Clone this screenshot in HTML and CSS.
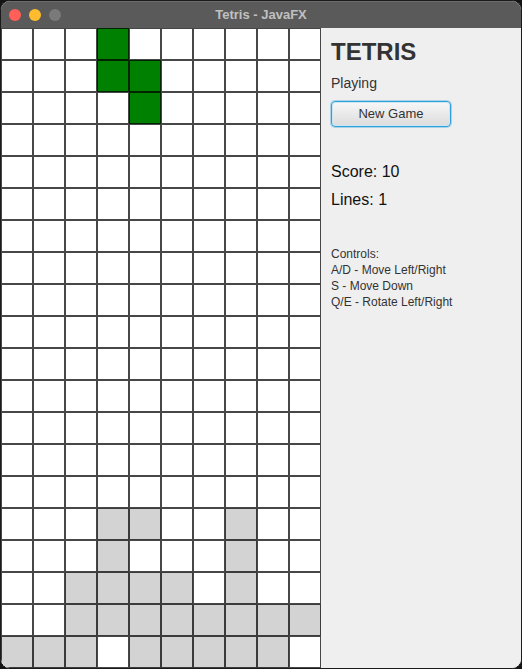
FILE: index.html
```html
<!DOCTYPE html>
<html>
<head>
<meta charset="utf-8">
<title>Tetris - JavaFX</title>
<link rel="stylesheet" href="styles.css">
</head>
<body>
<div class="window">
  <div class="titlebar">
    <div class="lights">
      <span class="light red"></span>
      <span class="light yellow"></span>
      <span class="light gray"></span>
    </div>
    <div class="title">Tetris - JavaFX</div>
  </div>
  <div class="content">
    <div class="board">
      <div class="c"></div><div class="c"></div><div class="c"></div><div class="c g"></div><div class="c"></div><div class="c"></div><div class="c"></div><div class="c"></div><div class="c"></div><div class="c"></div>
      <div class="c"></div><div class="c"></div><div class="c"></div><div class="c g"></div><div class="c g"></div><div class="c"></div><div class="c"></div><div class="c"></div><div class="c"></div><div class="c"></div>
      <div class="c"></div><div class="c"></div><div class="c"></div><div class="c"></div><div class="c g"></div><div class="c"></div><div class="c"></div><div class="c"></div><div class="c"></div><div class="c"></div>
      <div class="c"></div><div class="c"></div><div class="c"></div><div class="c"></div><div class="c"></div><div class="c"></div><div class="c"></div><div class="c"></div><div class="c"></div><div class="c"></div>
      <div class="c"></div><div class="c"></div><div class="c"></div><div class="c"></div><div class="c"></div><div class="c"></div><div class="c"></div><div class="c"></div><div class="c"></div><div class="c"></div>
      <div class="c"></div><div class="c"></div><div class="c"></div><div class="c"></div><div class="c"></div><div class="c"></div><div class="c"></div><div class="c"></div><div class="c"></div><div class="c"></div>
      <div class="c"></div><div class="c"></div><div class="c"></div><div class="c"></div><div class="c"></div><div class="c"></div><div class="c"></div><div class="c"></div><div class="c"></div><div class="c"></div>
      <div class="c"></div><div class="c"></div><div class="c"></div><div class="c"></div><div class="c"></div><div class="c"></div><div class="c"></div><div class="c"></div><div class="c"></div><div class="c"></div>
      <div class="c"></div><div class="c"></div><div class="c"></div><div class="c"></div><div class="c"></div><div class="c"></div><div class="c"></div><div class="c"></div><div class="c"></div><div class="c"></div>
      <div class="c"></div><div class="c"></div><div class="c"></div><div class="c"></div><div class="c"></div><div class="c"></div><div class="c"></div><div class="c"></div><div class="c"></div><div class="c"></div>
      <div class="c"></div><div class="c"></div><div class="c"></div><div class="c"></div><div class="c"></div><div class="c"></div><div class="c"></div><div class="c"></div><div class="c"></div><div class="c"></div>
      <div class="c"></div><div class="c"></div><div class="c"></div><div class="c"></div><div class="c"></div><div class="c"></div><div class="c"></div><div class="c"></div><div class="c"></div><div class="c"></div>
      <div class="c"></div><div class="c"></div><div class="c"></div><div class="c"></div><div class="c"></div><div class="c"></div><div class="c"></div><div class="c"></div><div class="c"></div><div class="c"></div>
      <div class="c"></div><div class="c"></div><div class="c"></div><div class="c"></div><div class="c"></div><div class="c"></div><div class="c"></div><div class="c"></div><div class="c"></div><div class="c"></div>
      <div class="c"></div><div class="c"></div><div class="c"></div><div class="c"></div><div class="c"></div><div class="c"></div><div class="c"></div><div class="c"></div><div class="c"></div><div class="c"></div>
      <div class="c"></div><div class="c"></div><div class="c"></div><div class="c s"></div><div class="c s"></div><div class="c"></div><div class="c"></div><div class="c s"></div><div class="c"></div><div class="c"></div>
      <div class="c"></div><div class="c"></div><div class="c"></div><div class="c s"></div><div class="c"></div><div class="c"></div><div class="c"></div><div class="c s"></div><div class="c"></div><div class="c"></div>
      <div class="c"></div><div class="c"></div><div class="c s"></div><div class="c s"></div><div class="c s"></div><div class="c s"></div><div class="c"></div><div class="c s"></div><div class="c"></div><div class="c"></div>
      <div class="c"></div><div class="c"></div><div class="c s"></div><div class="c s"></div><div class="c s"></div><div class="c s"></div><div class="c s"></div><div class="c s"></div><div class="c s"></div><div class="c s"></div>
      <div class="c s"></div><div class="c s"></div><div class="c s"></div><div class="c"></div><div class="c s"></div><div class="c s"></div><div class="c s"></div><div class="c s"></div><div class="c s"></div><div class="c"></div>
    </div>
    <div class="panel">
      <div class="heading">TETRIS</div>
      <div class="status">Playing</div>
      <button class="btn">New Game</button>
      <div class="score">Score: 10</div>
      <div class="lines">Lines: 1</div>
      <div class="controls">
        <div>Controls:</div>
        <div>A/D - Move Left/Right</div>
        <div>S - Move Down</div>
        <div>Q/E - Rotate Left/Right</div>
      </div>
    </div>
  </div>
</div>
</body>
</html>
```

FILE: styles.css
```css
html, body {
  margin: 0;
  padding: 0;
  background: #141414;
  width: 522px;
  height: 669px;
  overflow: hidden;
}

.window {
  box-sizing: border-box;
  width: 522px;
  height: 669px;
  border: 1px solid #1a1a1a;
  border-radius: 10px;
  overflow: hidden;
  display: flex;
  flex-direction: column;
  background: #efefef;
  font-family: "Liberation Sans", Arial, sans-serif;
}

.titlebar {
  height: 27px;
  flex: none;
  background: #5a5a5a;
  box-shadow: inset 0 1px 0 #6c6c6c;
  display: flex;
  align-items: center;
  position: relative;
}

.lights {
  display: flex;
  gap: 8px;
  padding-left: 8px;
  padding-top: 1px;
}

.light {
  width: 12px;
  height: 12px;
  border-radius: 50%;
  display: block;
}

.red { background: #ff5f57; }
.yellow { background: #febc2e; }
.gray { background: #7a7a7a; }

.title {
  position: absolute;
  left: 0;
  right: 0;
  top: 0;
  height: 27px;
  line-height: 28px;
  text-align: center;
  font-size: 13px;
  font-weight: bold;
  color: #c0c0c0;
}

.content {
  display: flex;
  flex: 1;
}

.board {
  display: grid;
  grid-template-columns: repeat(10, 32px);
  grid-template-rows: repeat(20, 32px);
  width: 320px;
  height: 640px;
  flex: none;
  background: #fff;
}

.c {
  box-sizing: border-box;
  border: 1px solid rgba(0, 0, 0, 0.72);
  background: #ffffff;
}

.c.g { background: #008000; }
.c.s { background: #d3d3d3; }

.panel {
  flex: 1;
  background: #efefef;
  padding: 10px 10px 0 10px;
  color: #333;
}

.heading {
  font-size: 24px;
  line-height: 28px;
  font-weight: bold;
  color: #333;
}

.status {
  margin-top: 8px;
  font-size: 14px;
  line-height: 18px;
  color: #333;
}

.btn {
  margin-top: 9px;
  display: flex;
  align-items: center;
  justify-content: center;
  box-sizing: border-box;
  width: 120px;
  height: 26px;
  padding: 0;
  border: 1px solid #2ea0de;
  border-radius: 4px;
  box-shadow: 0 0 0 1px rgba(46, 160, 222, 0.35), inset 0 0 0 1px #cfe6f3;
  background: linear-gradient(#f7f7f7, #dcdcdc);
  font-family: "Liberation Sans", Arial, sans-serif;
  font-size: 13px;
  line-height: 16px;
  color: #333;
}

.score {
  margin-top: 35px;
  font-size: 16px;
  line-height: 20px;
  color: #111;
}

.lines {
  margin-top: 8px;
  font-size: 16px;
  line-height: 20px;
  color: #111;
}

.controls {
  margin-top: 36px;
  font-size: 12px;
  line-height: 16px;
  color: #333;
}
```
